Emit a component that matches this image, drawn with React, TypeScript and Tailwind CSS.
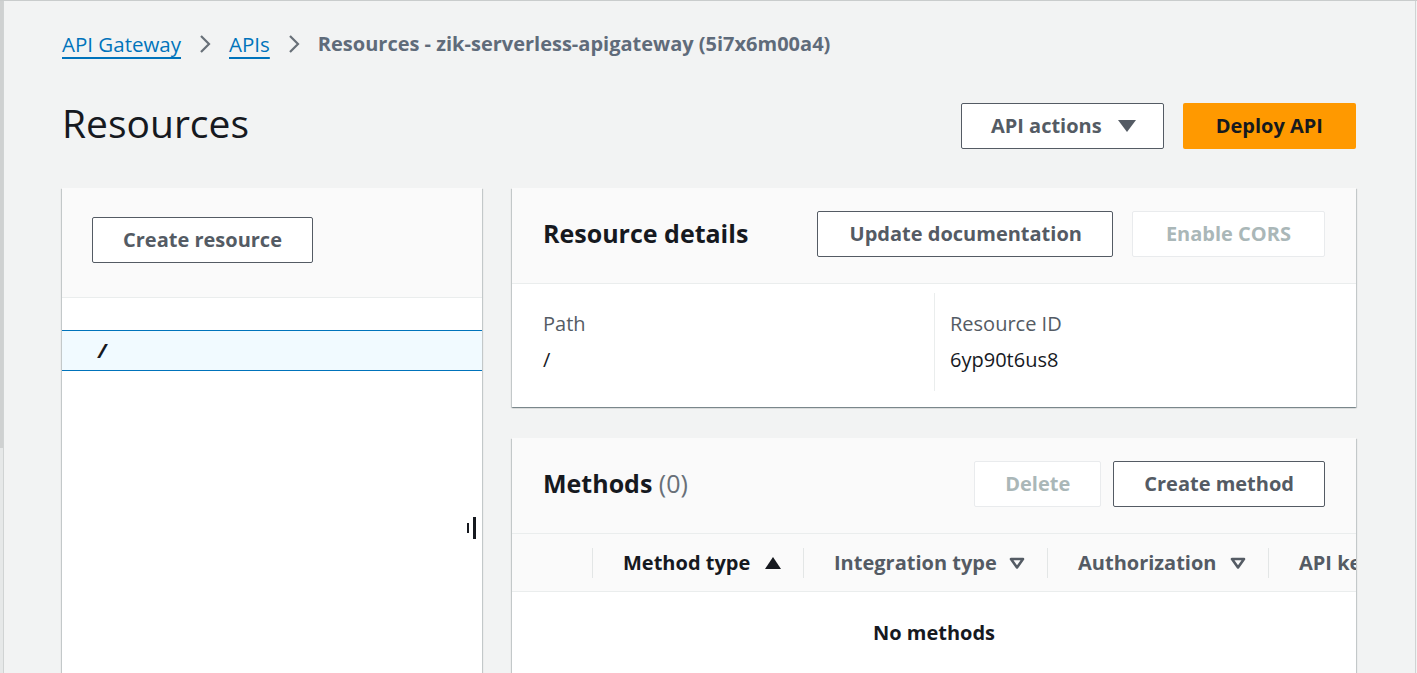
import React from "react";

const font = { fontFamily: '"Open Sans", "Liberation Sans", sans-serif' };

const Chevron = () => (
  <svg width="14" height="20" viewBox="0 0 14 20" className="mx-[17px]">
    <path d="M3 2 L11 10 L3 18" fill="none" stroke="#687078" strokeWidth="2.2" />
  </svg>
);

const Button = ({
  children,
  disabled,
  className = "px-[30px]",
}: {
  children: React.ReactNode;
  disabled?: boolean;
  className?: string;
}) => (
  <button
    className={`h-[46px] rounded-[2px] border bg-white text-[20px] font-bold flex items-center gap-4 ${
      disabled
        ? "border-[#e9ebed] text-[#aab7b8]"
        : "border-[#545b64] text-[#545b64]"
    } ${className}`}
  >
    {children}
  </button>
);

const SortIcon = ({ active }: { active?: boolean }) =>
  active ? (
    <svg width="16" height="12" viewBox="0 0 16 12">
      <path d="M8 0 L16 12 L0 12 Z" fill="#16191f" />
    </svg>
  ) : (
    <svg width="16" height="12" viewBox="0 0 16 12">
      <path d="M2 2 L14 2 L8 10.5 Z" fill="none" stroke="#545b64" strokeWidth="2.6" strokeLinejoin="round" />
    </svg>
  );

const panelShadow =
  "shadow-[0_1px_1px_0_rgba(0,28,36,0.3),1px_1px_1px_0_rgba(0,28,36,0.15),-1px_1px_1px_0_rgba(0,28,36,0.15)]";

export default function App() {
  const columns = [
    { label: "Method type", w: "w-[211px]", active: true },
    { label: "Integration type", w: "w-[244px]" },
    { label: "Authorization", w: "w-[221px]" },
  ];

  return (
    <div
      style={font}
      className="w-[1417px] h-[673px] overflow-hidden bg-[#f2f3f3] flex border-t border-[#c9cccc] pr-[1px]"
    >
      <div className="w-[3px] flex flex-col">
        <div className="h-[447px] bg-[#cfd1d1]" />
        <div className="flex-1 bg-[#e6e8e8]" />
      </div>
      <div className="w-[1px] bg-[#d0d3d3]" />

      <main className="flex-1 min-w-0 pl-[58px] pr-[59px] pt-[29px] border-r border-[#d0d3d3] flex flex-col">
        {/* breadcrumbs */}
        <nav className="h-[28px] flex items-center text-[20.5px]">
          <a className="text-[#0073bb] underline decoration-2 underline-offset-[5px]">API Gateway</a>
          <Chevron />
          <a className="text-[#0073bb] underline decoration-2 underline-offset-[5px]">APIs</a>
          <Chevron />
          <span className="font-bold text-[20px] text-[#5f6b7a]">
            Resources - zik-serverless-apigateway (5i7x6m00a4)
          </span>
        </nav>

        {/* title row */}
        <div className="mt-[45px] h-[46px] flex items-center justify-between">
          <h1 className="text-[39px] text-[#16191f] leading-none mb-[8px]">Resources</h1>
          <div className="flex gap-[19px]">
            <Button className="pl-[29px] pr-[27px]">
              API actions
              <svg width="18" height="12" viewBox="0 0 18 12">
                <path d="M0 0 L18 0 L9 12 Z" fill="#545b64" />
              </svg>
            </Button>
            <button className="h-[46px] px-[33px] rounded-[2px] bg-[#ff9900] text-[20px] font-bold text-[#16191f]">
              Deploy API
            </button>
          </div>
        </div>

        {/* panels */}
        <div className="mt-[39px] flex gap-[30px] flex-1">
          {/* left tree panel */}
          <section className={`w-[420px] shrink-0 bg-white flex flex-col ${panelShadow}`}>
            <div className="h-[110px] bg-[#fafafa] border-b border-[#eaeded] pt-[29px] pl-[30px]">
              <Button className="inline-flex px-[30px]">Create resource</Button>
            </div>
            <div className="h-[32px]" />
            <div className="h-[41px] bg-[#f1faff] border-y border-[#0073bb] flex items-center pl-[36px] text-[20px] font-bold italic text-[#16191f]">
              /
            </div>
            <div className="flex-1 flex justify-end pr-[6px] pt-[146px]">
              <div className="flex items-center gap-[4px] h-[22px]">
                <div className="w-[2px] h-[10px] bg-[#16191f]" />
                <div className="w-[3px] h-[22px] bg-[#16191f]" />
              </div>
            </div>
          </section>

          {/* right column */}
          <div className="flex-1 min-w-0 flex flex-col gap-[31px]">
            <section className={`bg-white ${panelShadow}`}>
              <div className="h-[96px] bg-[#fafafa] border-b border-[#eaeded] px-[31px] flex items-center justify-between">
                <h2 className="text-[25px] font-bold text-[#16191f] pb-[3px]">Resource details</h2>
                <div className="flex gap-[19px] pb-[3px]">
                  <Button className="pl-[32px] pr-[30px]">Update documentation</Button>
                  <Button disabled className="px-[33px]">Enable CORS</Button>
                </div>
              </div>
              <div className="px-[31px] pt-[9px] pb-[16px] grid grid-cols-2 text-[20px] leading-[28px]">
                <div className="py-[17px]">
                  <div className="text-[#545b64]">Path</div>
                  <div className="text-[#16191f] mt-[8px]">/</div>
                </div>
                <div className="border-l border-[#eaeded] pl-[15px] py-[17px]">
                  <div className="text-[#545b64]">Resource ID</div>
                  <div className="text-[#16191f] mt-[8px]">6yp90t6us8</div>
                </div>
              </div>
            </section>

            <section className={`flex-1 bg-white ${panelShadow}`}>
              <div className="h-[96px] bg-[#fafafa] border-b border-[#eaeded] px-[31px] flex items-center justify-between">
                <h2 className="text-[25px] font-bold text-[#16191f] pb-[3px]">
                  Methods <span className="font-normal text-[#687078]">(0)</span>
                </h2>
                <div className="flex gap-[12px] pb-[3px]">
                  <Button disabled className="px-[30px]">Delete</Button>
                  <Button className="px-[30px]">Create method</Button>
                </div>
              </div>
              <div className="h-[58px] bg-[#fafafa] border-b border-[#eaeded] flex items-center overflow-hidden whitespace-nowrap text-[20px] font-bold">
                <div className="w-[80px] shrink-0" />
                {columns.map((c) => (
                  <div
                    key={c.label}
                    className={`${c.w} shrink-0 h-[30px] border-l border-[#e3e6e6] pl-[30px] pr-[22px] flex items-center justify-between ${
                      c.active ? "text-[#16191f]" : "text-[#545b64]"
                    }`}
                  >
                    <span>{c.label}</span>
                    <SortIcon active={c.active} />
                  </div>
                ))}
                <div className="shrink-0 h-[30px] border-l border-[#e3e6e6] pl-[30px] flex items-center text-[#545b64]">
                  API key
                </div>
              </div>
              <div className="pt-[26px] text-center text-[20px] font-bold text-[#16191f]">No methods</div>
            </section>
          </div>
        </div>
      </main>
    </div>
  );
}
